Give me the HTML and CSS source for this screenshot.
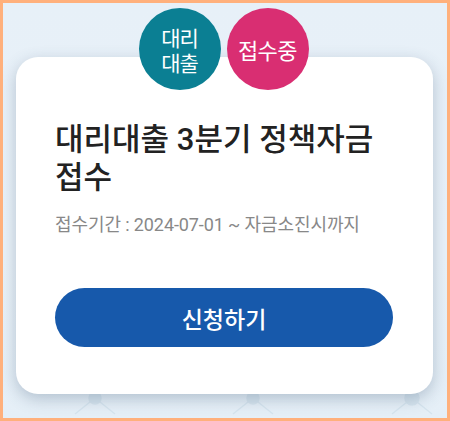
FILE: index.html
```html
<!DOCTYPE html>
<html lang="ko">
<head>
<meta charset="utf-8">
<link rel="stylesheet" href="styles.css">
</head>
<body>
<div class="frame">
  <svg class="deco" width="444" height="40" viewBox="0 0 444 40" aria-hidden="true">
    <g stroke="#d6e4ee" stroke-width="1.5" fill="#d6e4ee">
      <line x1="92" y1="0" x2="92" y2="20"/><line x1="92" y1="20" x2="72" y2="36"/><line x1="92" y1="20" x2="112" y2="36"/>
      <circle cx="92" cy="20" r="6"/>
      <line x1="250" y1="0" x2="250" y2="20"/><line x1="250" y1="20" x2="230" y2="36"/><line x1="250" y1="20" x2="270" y2="36"/>
      <circle cx="250" cy="20" r="6"/>
      <line x1="409" y1="0" x2="409" y2="20"/><line x1="409" y1="20" x2="389" y2="36"/><line x1="409" y1="20" x2="429" y2="36"/>
      <circle cx="409" cy="20" r="7"/>
    </g>
  </svg>
  <div class="badges">
    <div class="badge teal">대리<br>대출</div>
    <div class="badge pink">접수중</div>
  </div>
  <div class="card">
    <h1 class="title">대리대출 3분기 정책자금<br>접수</h1>
    <p class="period">접수기간 : 2024-07-01 ~ 자금소진시까지</p>
    <button class="apply">신청하기</button>
  </div>
</div>
</body>
</html>
```

FILE: styles.css
```css
* { box-sizing: border-box; }
html, body { margin: 0; padding: 0; }
body {
  width: 450px;
  height: 421px;
  font-family: "Roboto", "Noto Sans CJK KR", sans-serif;
  overflow: hidden;
}
.frame {
  position: relative;
  width: 450px;
  height: 421px;
  border: 3px solid #ffb07c;
  background: linear-gradient(180deg, #e7f0f8 0%, #e9f1f8 60%, #e5eff7 100%);
  padding: 5px 14px 0 13px;
  overflow: hidden;
}
.deco {
  position: absolute;
  left: 0;
  bottom: 0;
}
.badges {
  position: relative;
  z-index: 2;
  display: flex;
  justify-content: center;
  gap: 6px;
  padding-right: 2px;
}
.badge {
  width: 82px;
  height: 82px;
  border-radius: 50%;
  display: flex;
  align-items: center;
  justify-content: center;
  text-align: center;
  color: #fff;
  font-family: "Noto Sans CJK KR", sans-serif;
  font-weight: 400;
  font-size: 21px;
  line-height: 25px;
  letter-spacing: -1px;
}
.teal { background: #0b7f93; padding-top: 1px; }
.pink { background: #d92e72; font-size: 22px; letter-spacing: -0.5px; }
.card {
  position: relative;
  z-index: 1;
  margin-top: -33px;
  height: 337px;
  background: #fff;
  border-radius: 22px;
  box-shadow: 0 5px 16px rgba(60, 85, 115, 0.3);
  padding: 64px 40px 0 39px;
}
.title {
  margin: 0;
  font-size: 31px;
  line-height: 38px;
  font-weight: 500;
  color: #222;
}
.period {
  margin: 15px 0 0;
  font-size: 18px;
  line-height: 26px;
  color: #888;
  letter-spacing: -0.1px;
}
.apply {
  display: block;
  width: 100%;
  height: 59px;
  margin-top: 50px;
  border: 0;
  border-radius: 30px;
  background: #1759ab;
  color: #fff;
  font-family: "Noto Sans CJK KR", sans-serif;
  font-size: 23px;
  font-weight: 500;
  padding: 0;
}
```
